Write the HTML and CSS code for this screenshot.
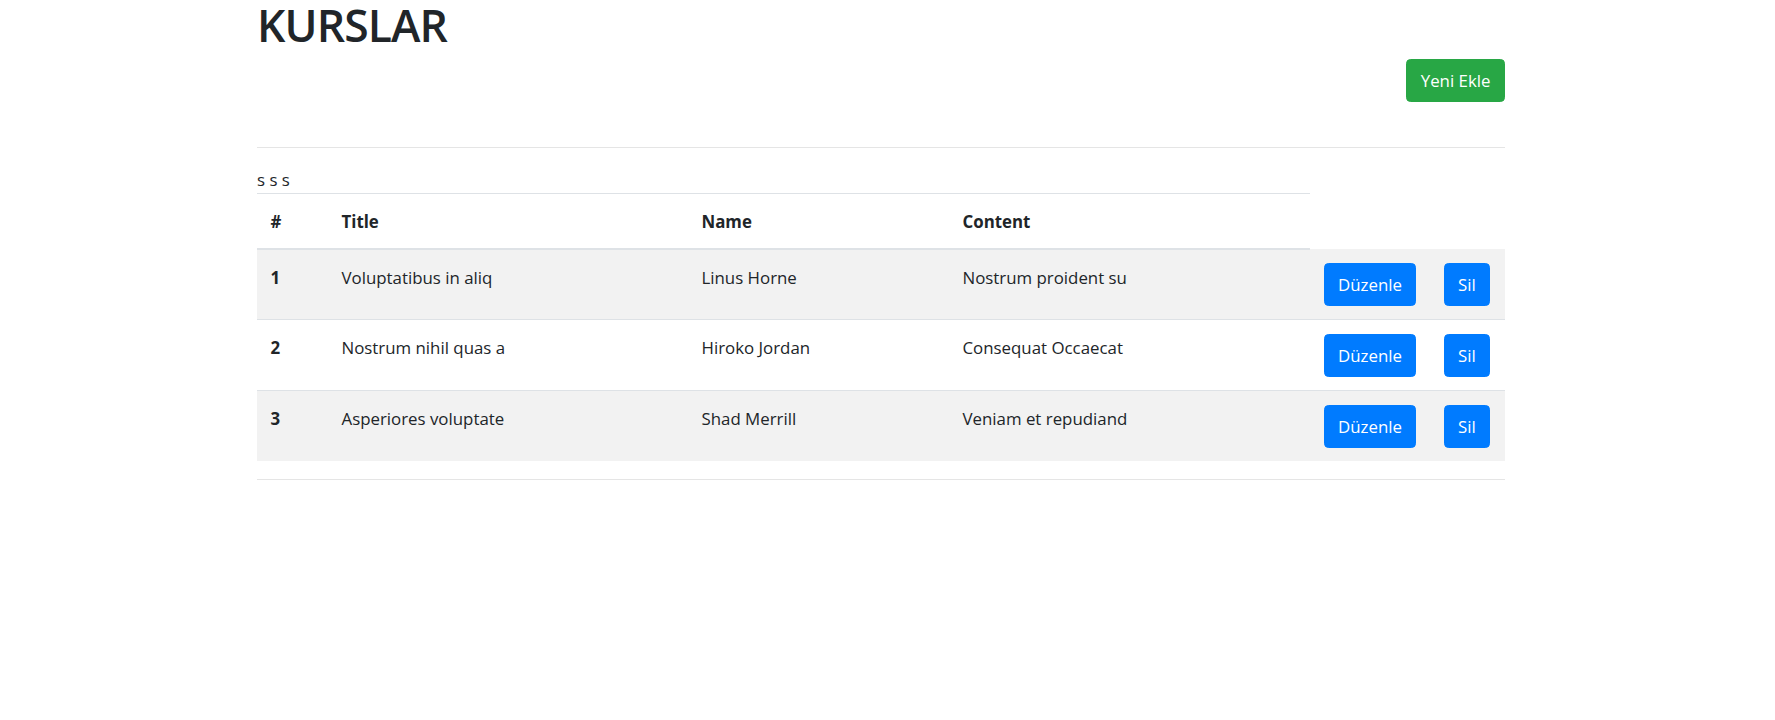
FILE: index.html
```html
<!DOCTYPE html>
<html lang="tr">
<head>
<meta charset="utf-8">
<title>Kurslar</title>
<link rel="stylesheet" href="styles.css">
</head>
<body>
<div class="container">
  <h1 class="page-title">KURSLAR</h1>
  <div class="actions">
    <a class="btn btn-success" href="#">Yeni Ekle</a>
  </div>
  <hr class="divider">
  <div class="note">s s s</div>
  <table class="table">
    <colgroup>
      <col class="c-num"><col class="c-title"><col class="c-name"><col class="c-content"><col class="c-edit"><col class="c-del">
    </colgroup>
    <thead>
      <tr><th>#</th><th>Title</th><th>Name</th><th>Content</th></tr>
    </thead>
    <tbody>
      <tr class="odd"><th>1</th><td>Voluptatibus in aliq</td><td>Linus Horne</td><td>Nostrum proident su</td><td><a class="btn btn-primary" href="#">Düzenle</a></td><td><a class="btn btn-primary" href="#">Sil</a></td></tr>
      <tr><th>2</th><td>Nostrum nihil quas a</td><td>Hiroko Jordan</td><td>Consequat Occaecat</td><td><a class="btn btn-primary" href="#">Düzenle</a></td><td><a class="btn btn-primary" href="#">Sil</a></td></tr>
      <tr class="odd"><th>3</th><td>Asperiores voluptate</td><td>Shad Merrill</td><td>Veniam et repudiand</td><td><a class="btn btn-primary" href="#">Düzenle</a></td><td><a class="btn btn-primary" href="#">Sil</a></td></tr>
    </tbody>
  </table>
  <hr class="divider">
</div>
</body>
</html>
```
FILE: styles.css
```css
* { box-sizing: border-box; }
body {
  margin: 0;
  font-family: "Open Sans", "Noto Sans", sans-serif;
  font-size: 16.85px;
  line-height: 27px;
  color: #212529;
  background: #fff;
}
.container {
  width: 1248px;
  margin-left: 257px;
}
.page-title {
  margin: 0;
  height: 54px;
  font-size: 44.5px;
  line-height: 50px;
  font-weight: 600;
  letter-spacing: -0.9px;
  color: #212529;
}
.actions {
  display: flex;
  justify-content: flex-end;
  padding-top: 5px;
  height: 75px;
}
.btn {
  display: inline-block;
  height: 43px;
  padding: 7px 13.5px;
  border: 1px solid transparent;
  border-radius: 4.5px;
  font-size: 16.85px;
  line-height: 27px;
  color: #fff;
  text-decoration: none;
  white-space: nowrap;
}
.btn-success { background: #28a745; border-color: #28a745; }
.btn-primary { background: #007bff; border-color: #007bff; }
.divider {
  margin: 18px 0;
  border: 0;
  border-top: 1px solid rgba(0,0,0,.1);
}
.note { line-height: 27px; }
.table {
  width: 100%;
  border-collapse: collapse;
  table-layout: fixed;
  margin-bottom: 18px;
}
.c-num { width: 71px; }
.c-title { width: 360px; }
.c-name { width: 261px; }
.c-content { width: 361px; }
.c-edit { width: 120px; }
.c-del { width: 75px; }
.table th, .table td {
  padding: 13.5px;
  text-align: left;
  vertical-align: top;
  border-top: 1px solid #dee2e6;
}
.table th { font-weight: 700; }
.table thead th {
  vertical-align: bottom;
  border-bottom: 2px solid #dee2e6;
}
.table tbody tr.odd { background: #f2f2f2; }
.table tbody tr:first-child th, .table tbody tr:first-child td { border-top: 0; }
```
